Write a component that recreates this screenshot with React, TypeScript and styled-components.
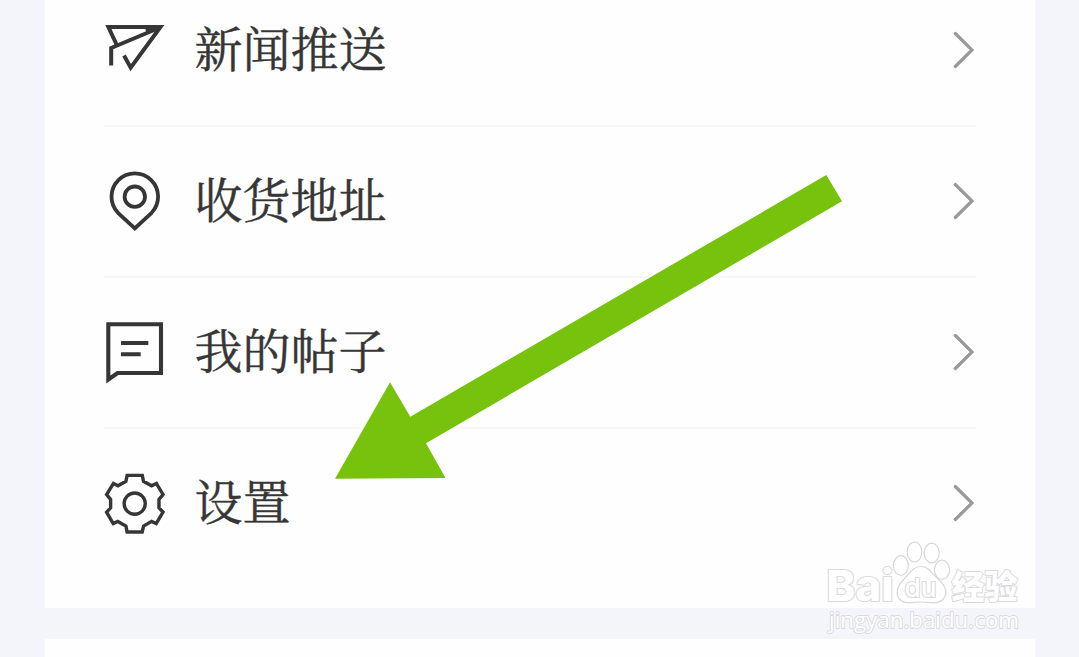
import type { ReactNode } from 'react';
import styled, { createGlobalStyle } from 'styled-components';

const GlobalStyle = createGlobalStyle`
  * {
    box-sizing: border-box;
  }

  body {
    margin: 0;
    overflow: hidden;
    background-color: #f4f5fa;
  }
`;

const PageEl = styled.div`
  position: relative;
  display: flex;
  flex-direction: column;
  gap: 31px;
  width: 1079px;
  height: 657px;
  padding: 0 44px 0 45px;
  overflow: hidden;
  background-color: #f4f5fa;
`;

const CardEl = styled.section`
  flex-shrink: 0;
  height: 608px;
  padding: 0 59px 0 57px;
  overflow: hidden;
  background-color: #fefefe;
`;

const NextCardEl = styled.section`
  flex-grow: 1;
  background-color: #fefefe;
`;

const ListEl = styled.ul`
  margin: -24px 0 0;
  padding: 0;
  list-style: none;
`;

const RowEl = styled.li`
  display: flex;
  align-items: center;
  height: 151px;
  padding: 0 2px 3px 0;
  background: linear-gradient(#f7f7f7, #f7f7f7) 2px 100% / 100% 2px no-repeat;

  &:last-child {
    background: none;
  }
`;

const IconEl = styled.svg`
  flex-shrink: 0;
  width: 64px;
  height: 64px;
  fill: none;
  stroke: #363636;
`;

const LabelEl = styled.span`
  flex-grow: 1;
  margin-left: 28.5px;
  padding-bottom: 7px;
  font-family: 'Noto Serif CJK SC', 'Noto Serif SC', 'Source Han Serif SC', 'Noto Sans CJK SC', serif;
  font-size: 48px;
  line-height: 64px;
  color: #363636;
  -webkit-text-stroke: 0.4px #363636;
`;

const ChevronEl = styled.svg`
  flex-shrink: 0;
  width: 22px;
  height: 38px;
  fill: none;
  stroke: #999;
  stroke-width: 3.2;
  stroke-linecap: round;
`;

const OverlayEl = styled.svg`
  position: absolute;
  top: 0;
  left: 0;
  pointer-events: none;
`;

const MarkTextEl = styled.text<{
  $size: number;
  $weight: number;
  $family: string;
  $outline: number;
}>`
  font-family: ${({ $family }) => $family}, sans-serif;
  font-size: ${({ $size }) => $size}px;
  font-weight: ${({ $weight }) => $weight};
  fill: #fff;
  stroke: #dadadc;
  stroke-width: ${({ $outline }) => $outline}px;
  stroke-linejoin: round;
  paint-order: stroke;
`;

interface RowProps {
  label: string;
  icon: ReactNode;
}

function Row({ label, icon }: RowProps) {
  return (
    <RowEl>
      {icon}
      <LabelEl>{label}</LabelEl>
      <ChevronEl viewBox='0 0 22 38'>
        <path d='M3.3 2.5 L20 19 L3.3 35.5' />
      </ChevronEl>
    </RowEl>
  );
}

const rows: RowProps[] = [
  {
    label: '新闻推送',
    icon: (
      <IconEl viewBox='0 0 64 64' strokeWidth={4}>
        <path d='M15 27.5 L6.4 9 H58.5 L28.7 49.6 L22 37.5' />
        <path d='M9.2 47.5 V30 L58 9.5' />
        <path d='M43 10 H57 L45 16.5 Z' fill='#363636' stroke='none' />
      </IconEl>
    ),
  },
  {
    label: '收货地址',
    icon: (
      <IconEl viewBox='0 0 64 64' strokeWidth={3.8}>
        <path d='M32.8 59.4 L16 43.8 A23.3 23.3 0 1 1 49.6 43.8 Z' />
        <circle cx='32.8' cy='27.7' r='10.2' />
      </IconEl>
    ),
  },
  {
    label: '我的帖子',
    icon: (
      <IconEl viewBox='0 0 64 64' strokeWidth={4.1}>
        <path d='M6.3 58 V4.3 H59 V53 H15.6 L6.3 59.5 Z' />
        <path d='M19 23 H46.3 M19 34.2 H38.7' />
      </IconEl>
    ),
  },
  {
    label: '设置',
    icon: (
      <IconEl viewBox='0 0 64 64' strokeWidth={3.4}>
        <path d='M25.1 4.4 H40.3 L41.5 10.3 L49.6 14.8 L54.4 12.4 L61 23.5 L57 28.3 V36.9 L61 41 L54.2 52.6 L49.6 50.4 L41.6 55 L40.2 61 H25.1 L23.9 55 L15.8 50.4 L11.2 52.6 L4.6 41.2 L8.6 36.9 V28.3 L4.6 23.5 L11.4 12.4 L16 14.8 L23.9 10.3 Z' />
        <circle cx='32.7' cy='32.6' r='10.6' />
      </IconEl>
    ),
  },
];

function PointerArrow() {
  return (
    <OverlayEl width='1079' height='657'>
      <path
        d='M335 478.7 L390 382.3 L410.3 416.8 L826.3 175 L842 201.2 L426 443.3 L445.5 478 Z'
        fill='#76c20d'
      />
    </OverlayEl>
  );
}

function Watermark() {
  return (
    <OverlayEl width='1079' height='657'>
      <MarkTextEl
        $size={43}
        $weight={800}
        $family='Inter'
        $outline={2.2}
        x='826.5'
        y='601'
        textLength='67'
        lengthAdjust='spacingAndGlyphs'
      >
        Bai
      </MarkTextEl>
      <g fill='#fff' stroke='#d8d8da' strokeWidth='1.2'>
        <ellipse cx='900.8' cy='565.5' rx='7.5' ry='9.8' />
        <ellipse cx='914.5' cy='552' rx='7.3' ry='10' />
        <ellipse cx='931.7' cy='553' rx='7.6' ry='9.8' />
        <ellipse cx='942' cy='569.8' rx='7.6' ry='9.6' />
        <path d='M921 566.5 C929 566.5 932 574 938 579 C946 586 948 592 944 598 C940 605 931 602 921 602 C911 602 903 605 898.5 598 C895 591 898 585 904 579 C910 573 913 566.5 921 566.5 Z' />
      </g>
      <MarkTextEl
        $size={26}
        $weight={500}
        $family='Inter'
        $outline={2.2}
        x='904.5'
        y='597'
        textLength='32'
        lengthAdjust='spacingAndGlyphs'
      >
        du
      </MarkTextEl>
      <MarkTextEl
        $size={33}
        $weight={900}
        $family="'Noto Sans CJK SC'"
        $outline={2}
        x='951.5'
        y='598.5'
        textLength='66'
        lengthAdjust='spacingAndGlyphs'
      >
        经验
      </MarkTextEl>
      <MarkTextEl
        $size={22.5}
        $weight={500}
        $family="'Open Sans', 'Noto Sans'"
        $outline={1.8}
        x='829'
        y='627.5'
        textLength='190'
        lengthAdjust='spacingAndGlyphs'
      >
        jingyan.baidu.com
      </MarkTextEl>
    </OverlayEl>
  );
}

export default function App() {
  return (
    <>
      <GlobalStyle />
      <PageEl>
        <CardEl>
          <ListEl>
            {rows.map(d => (
              <Row key={d.label} label={d.label} icon={d.icon} />
            ))}
          </ListEl>
        </CardEl>
        <NextCardEl />
        <PointerArrow />
        <Watermark />
      </PageEl>
    </>
  );
}
